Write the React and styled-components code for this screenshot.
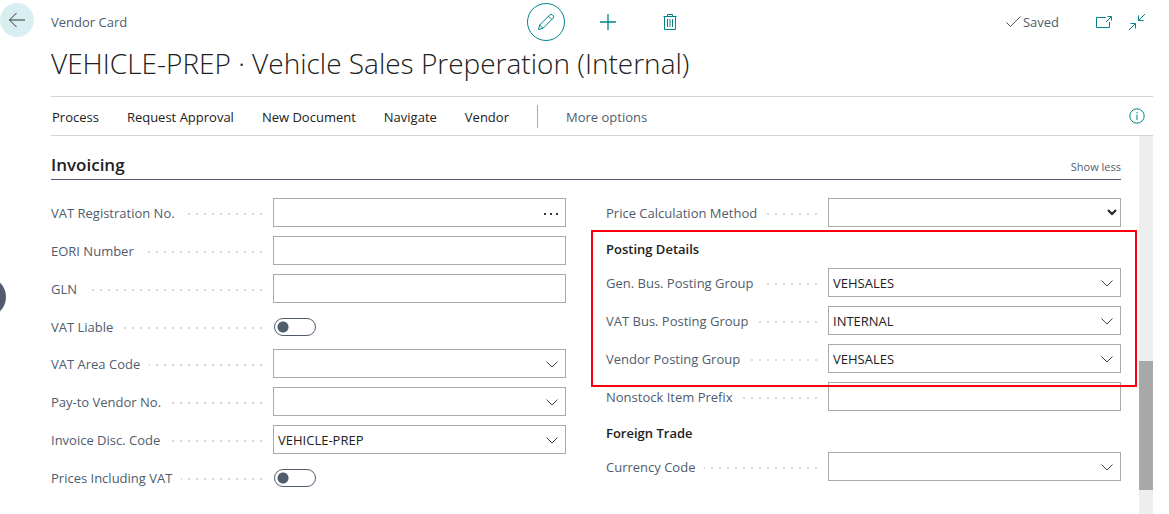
import React from "react";
import styled, { createGlobalStyle, css } from "styled-components";

const c = {
  teal: "#00838a",
  slate: "#505c6d",
  ink: "#212121",
  rule: "#d2d4d8",
  border: "#a9a9a9",
};

const Global = createGlobalStyle`
  *, *::before, *::after { box-sizing: border-box; }
  html, body, #root { height: 100%; }
  body {
    margin: 0;
    overflow: hidden;
    background: #fff;
    color: ${c.ink};
    font: 13px/20px "Open Sans", "Noto Sans", sans-serif;
  }
  button, input, select { font: inherit; color: inherit; margin: 0; }
`;

const Page = styled.div`
  position: relative;
  display: flex;
  flex-direction: column;
  min-height: 100vh;
  padding-right: 16px;
`;

const Header = styled.header`
  display: grid;
  grid-template-columns: 51px 1fr auto 1fr;
  align-items: start;
  height: 44px;
`;

const IconButton = styled.button`
  display: grid;
  place-items: center;
  flex: none;
  width: ${(p) => p.$size || 24}px;
  height: ${(p) => p.$size || 24}px;
  padding: 0;
  border: 1px solid ${(p) => (p.$ring ? c.teal : "transparent")};
  border-radius: 50%;
  background: ${(p) => p.$fill || "transparent"};
  color: ${(p) => p.$color || c.teal};
  svg { display: block; }
`;

const BackSlot = styled.div`
  padding-top: 3px;
`;

const PageType = styled.div`
  padding-top: 12px;
  color: ${c.slate};
`;

const HeaderActions = styled.div`
  display: flex;
  align-items: center;
  gap: 24px;
  padding: 3px 0 0 12px;
`;

const HeaderStatus = styled.div`
  display: flex;
  align-items: center;
  justify-content: flex-end;
  padding: 10px 4px 0 0;
  gap: 9px;
`;

const Saved = styled.span`
  display: flex;
  align-items: center;
  gap: 2px;
  margin-right: 24px;
  color: ${c.slate};
`;

const Title = styled.h1`
  margin: 0 0 14px 51px;
  font-size: 28px;
  line-height: 38px;
  font-weight: 300;
  white-space: nowrap;
`;

const ActionBar = styled.nav`
  display: flex;
  align-items: center;
  gap: 28px;
  height: 40px;
  margin-left: 51px;
  padding: 0 4px 0 1px;
  border-top: 1px solid ${c.rule};
  border-bottom: 1px solid ${c.rule};
`;

const Action = styled.button`
  padding: 2px 0 0;
  border: 0;
  background: none;
  line-height: 20px;
  white-space: nowrap;
  color: ${(p) => (p.$muted ? c.slate : c.ink)};
`;

const Divider = styled.span`
  width: 1px;
  height: 23px;
  background: ${c.border};
`;

const InfoSlot = styled.div`
  display: flex;
  margin-left: auto;
`;

const Body = styled.div`
  display: flex;
  flex: 1;
`;

const Content = styled.main`
  flex: 1;
  min-width: 0;
  padding: 15px 18px 0 51px;
`;

const Scrollbar = styled.div`
  display: flex;
  flex-direction: column;
  width: 14px;
  padding: 225px 0 24px;
  background: #eee;
`;

const Thumb = styled.div`
  flex: 1;
  background: #a9a9a9;
`;

const SectionHead = styled.div`
  display: flex;
  justify-content: space-between;
  height: 29px;
  border-bottom: 1px solid ${c.slate};
`;

const SectionTitle = styled.h2`
  margin: 0;
  font-size: 17px;
  line-height: 28px;
  font-weight: 600;
`;

const ShowLess = styled.button`
  padding: 4px 0 0;
  border: 0;
  background: none;
  color: ${c.slate};
  font-size: 11px;
`;

const Columns = styled.div`
  display: grid;
  grid-template-columns: 1fr 1fr;
  gap: 40px;
  padding-top: 18px;
`;

const Stack = styled.div`
  position: relative;
  display: flex;
  flex-direction: column;
  gap: 9px;
`;

const Callout = styled.div`
  position: absolute;
  z-index: 1;
  inset: -6px -16px -14px -15px;
  border: 2px solid #f7000f;
  pointer-events: none;
`;

const GroupTitle = styled.h3`
  height: 23px;
  margin: 0;
  padding-top: 3px;
  font-size: 13px;
  line-height: 20px;
  font-weight: 600;
`;

const Row = styled.div`
  display: grid;
  grid-template-columns: 222fr 293fr;
  height: ${(p) => (p.$short ? 28 : 29)}px;
`;

const Caption = styled.div`
  display: flex;
  align-items: center;
  gap: 9px;
  height: 29px;
  padding-right: 11px;
`;

const Label = styled.label`
  color: ${c.slate};
  white-space: nowrap;
`;

const Dots = styled.span`
  flex: 1;
  height: 2px;
  margin-top: 2px;
  background: repeating-linear-gradient(to left, #d8d8d8 0 2px, transparent 2px 8px);
`;

const Control = styled.div`
  display: flex;
  align-items: center;
  min-width: 0;
  ${(p) => p.$boxed && css`border: 1px solid ${c.border};`}
`;

const TextInput = styled.input`
  flex: 1;
  min-width: 0;
  height: 100%;
  padding: 0 4px;
  border: 0;
  outline: 0;
  background: transparent;
`;

const FieldButton = styled.button`
  display: grid;
  place-items: center;
  width: 27px;
  height: 100%;
  padding: 2px 0 0;
  border: 0;
  background: none;
  color: #444;
`;

const Select = styled.select`
  width: 100%;
  height: 100%;
  padding-right: 1px;
  border: 0;
  background: #fff;
  outline: 0;
`;

const Toggle = styled.input`
  appearance: none;
  width: 42px;
  height: 18px;
  margin: 0 0 0 1px;
  border: 1px solid ${c.slate};
  border-radius: 9px;
  background: radial-gradient(circle at 8px 8px, ${c.slate} 5px, transparent 6px);
`;

const SideHandle = styled.button`
  position: absolute;
  left: -34px;
  top: 277px;
  width: 40px;
  height: 40px;
  padding: 0;
  border: 0;
  border-radius: 50%;
  background: ${c.slate};
`;

const Svg = ({ w = 16, h = w, children }) => (
  <svg width={w} height={h} viewBox={`0 0 ${w} ${h}`} fill="none" stroke="currentColor" strokeWidth="1" aria-hidden="true">
    {children}
  </svg>
);

const Chevron = () => (
  <Svg w={12} h={7}><path d="M.5.5 6 6 11.5.5" /></Svg>
);
const Ellipsis = () => (
  <svg width="15" height="2" viewBox="0 0 15 2" fill="#333" aria-hidden="true">
    <rect width="2" height="2" /><rect x="6" width="2" height="2" /><rect x="12" width="2" height="2" />
  </svg>
);

const idOf = (label) => label.toLowerCase().replace(/[^a-z]+/g, "-");

function Field({ label, kind = "text", value = "" }) {
  const id = idOf(label);
  return (
    <Row $short={kind === "toggle"}>
      <Caption>
        <Label htmlFor={id}>{label}</Label>
        <Dots />
      </Caption>
      <Control $boxed={kind !== "toggle"}>
        {kind === "toggle" && <Toggle id={id} type="checkbox" role="switch" />}
        {kind === "select" && <Select id={id}><option> </option></Select>}
        {kind !== "toggle" && kind !== "select" && <TextInput id={id} defaultValue={value} />}
        {kind === "lookup" && <FieldButton aria-label={`Choose ${label}`}><Chevron /></FieldButton>}
        {kind === "assist" && <FieldButton aria-label={`Look up ${label}`}><Ellipsis /></FieldButton>}
      </Control>
    </Row>
  );
}

export default function App() {
  return (
    <>
      <Global />
      <Page>
        <Header>
          <BackSlot>
            <IconButton $size={34} $fill="#d8eff1" $color="#333" aria-label="Back">
              <Svg w={18}><path d="M17 9H1.5M8.500 2l-7 7 7 7" /></Svg>
            </IconButton>
          </BackSlot>
          <PageType>Vendor Card</PageType>
          <HeaderActions>
            <IconButton $size={38} $ring aria-label="Edit">
              <Svg w={18}>
                <path d="M1.500 16.500 2.700 12 12.800 1.900a1.900 1.900 0 0 1 2.700 0l.6.6a1.900 1.900 0 0 1 0 2.700L6 15.300zM11.500 3.200l3.300 3.300M2.700 12 6 15.300" />
              </Svg>
            </IconButton>
            <IconButton $size={38} aria-label="New"><Svg w={16}><path d="M8 0v16M0 8h16" strokeWidth="1.300" /></Svg></IconButton>
            <IconButton $size={38} aria-label="Delete">
              <Svg w={14} h={16}>
                <path d="M.5 2.500h13M4.500 2.500v-2h5v2M1.500 2.500v13h11v-13M4.500 5v8M7 5v8M9.500 5v8" />
              </Svg>
            </IconButton>
          </HeaderActions>
          <HeaderStatus>
            <Saved><Svg w={15} h={12}><path d="m.5 6.500 4 4 10-10" /></Svg>Saved</Saved>
            <IconButton aria-label="Open in new window">
              <Svg w={16} h={12}><path d="M10 1.500H.5v10h13V6M10 6l5-5M11.500.5h4v4" /></Svg>
            </IconButton>
            <IconButton aria-label="Collapse">
              <Svg w={16}><path d="M16 0l-6 6M9.500 1.500v5h5M0 16l6-6M1.500 9.500h5v5" /></Svg>
            </IconButton>
          </HeaderStatus>
        </Header>
        <Title>VEHICLE-PREP · Vehicle Sales Preperation (Internal)</Title>
        <ActionBar>
          <Action>Process</Action>
          <Action>Request Approval</Action>
          <Action>New Document</Action>
          <Action>Navigate</Action>
          <Action>Vendor</Action>
          <Divider />
          <Action $muted>More options</Action>
          <InfoSlot>
            <IconButton aria-label="Details">
              <Svg w={16}><circle cx="8" cy="8" r="7.200" /><path d="M8 6.500V12M8 4v1.300" /></Svg>
            </IconButton>
          </InfoSlot>
        </ActionBar>
        <Body>
          <Content>
            <SectionHead>
              <SectionTitle>Invoicing</SectionTitle>
              <ShowLess>Show less</ShowLess>
            </SectionHead>
            <Columns>
              <Stack>
                <Field label="VAT Registration No." kind="assist" />
                <Field label="EORI Number" />
                <Field label="GLN" />
                <Field label="VAT Liable" kind="toggle" />
                <Field label="VAT Area Code" kind="lookup" />
                <Field label="Pay-to Vendor No." kind="lookup" />
                <Field label="Invoice Disc. Code" kind="lookup" value="VEHICLE-PREP" />
                <Field label="Prices Including VAT" kind="toggle" />
              </Stack>
              <Stack>
                <Field label="Price Calculation Method" kind="select" />
                <Stack>
                  <GroupTitle>Posting Details</GroupTitle>
                  <Field label="Gen. Bus. Posting Group" kind="lookup" value="VEHSALES" />
                  <Field label="VAT Bus. Posting Group" kind="lookup" value="INTERNAL" />
                  <Field label="Vendor Posting Group" kind="lookup" value="VEHSALES" />
                  <Callout />
                </Stack>
                <Field label="Nonstock Item Prefix" />
                <GroupTitle>Foreign Trade</GroupTitle>
                <Field label="Currency Code" kind="lookup" />
              </Stack>
            </Columns>
          </Content>
          <Scrollbar><Thumb /></Scrollbar>
        </Body>
        <SideHandle aria-label="Previous record" />
      </Page>
    </>
  );
}
